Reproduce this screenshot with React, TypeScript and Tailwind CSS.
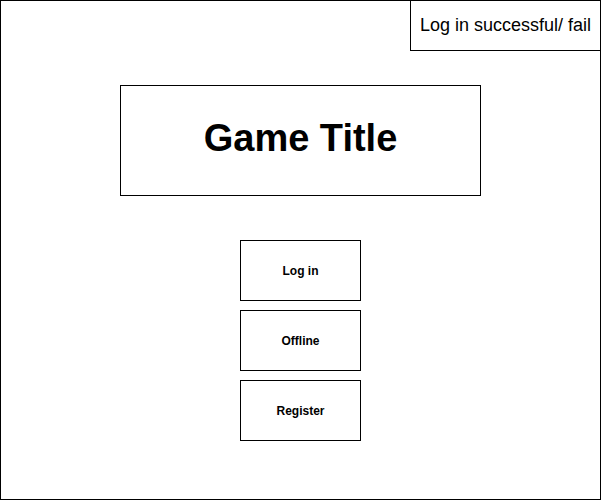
export default function App() {
  const font = { fontFamily: '"Liberation Sans", Arial, Helvetica, sans-serif' };
  return (
    <div className="w-[601px] h-[500px] border border-black bg-white flex flex-col text-black" style={font}>
      <div className="flex justify-end">
        <div className="w-[190px] h-[50px] border-l border-b border-black flex items-center justify-center text-[18px]">
          Log in successful/ fail
        </div>
      </div>
      <div className="mt-[34px] mx-auto w-[361px] h-[111px] border border-black flex items-center justify-center pb-[5px]">
        <span className="text-[38px] font-bold leading-none">Game Title</span>
      </div>
      <div className="mt-[44px] flex flex-col items-center gap-[9px]">
        {["Log in", "Offline", "Register"].map((t) => (
          <div key={t} className="w-[121px] h-[61px] border border-black flex items-center justify-center text-[12px] font-bold">
            {t}
          </div>
        ))}
      </div>
    </div>
  );
}
